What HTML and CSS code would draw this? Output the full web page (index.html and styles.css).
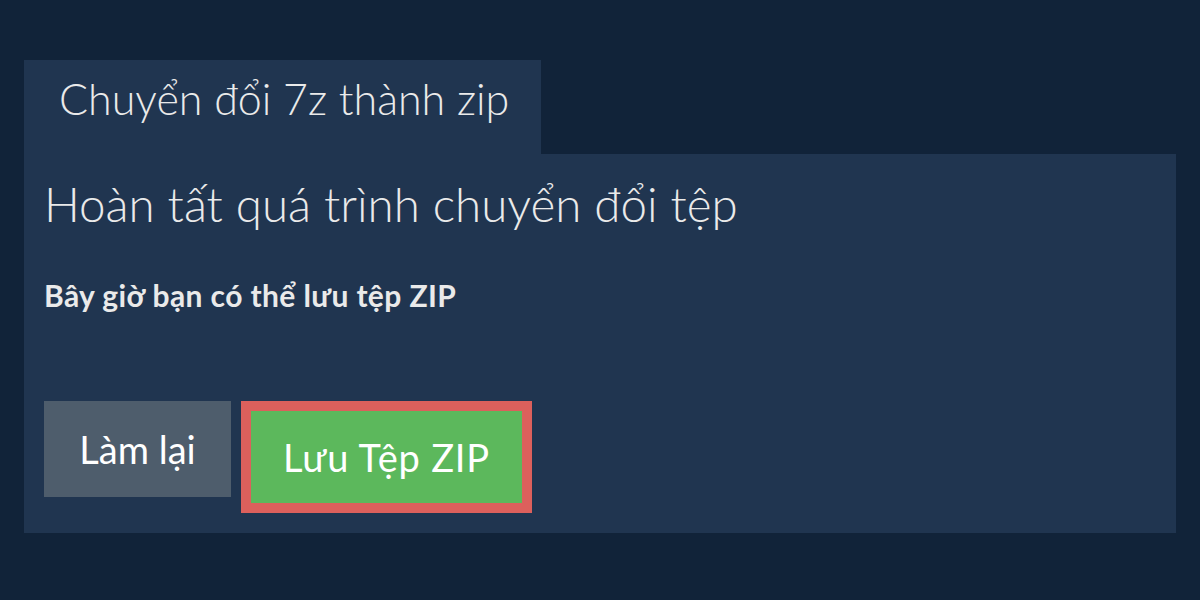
FILE: index.html
```html
<!DOCTYPE html>
<html lang="vi">

<head>
    <meta charset="UTF-8">
    <meta name="viewport" content="width=device-width, initial-scale=1.0">
    <title>Chuyển đổi 7z thành zip</title>
    <link rel="stylesheet" href="styles.css">
</head>

<body>
    <div class="wrapper">
        <div class="tab">Chuyển đổi 7z thành zip</div>
        <div class="panel">
            <h1>Hoàn tất quá trình chuyển đổi tệp</h1>
            <p class="note">Bây giờ bạn có thể lưu tệp ZIP</p>
            <div class="actions">
                <button class="btn btn-reset">Làm lại</button>
                <button class="btn btn-save">Lưu Tệp ZIP</button>
            </div>
        </div>
    </div>
</body>

</html>
```

FILE: styles.css
```css
body {
    font-family: Lato, "Noto Sans", sans-serif;
    margin: 0;
    padding: 0;
    background-color: #112339;
    color: #fff;
}

.wrapper {
    padding: 60px 24px 24px;
}

.tab {
    display: inline-block;
    background-color: #203550;
    padding: 0 32px 0 35px;
    height: 94px;
    line-height: 78px;
    font-size: 43px;
    font-weight: 300;
    color: #eaeaea;
}

.panel {
    background-color: #203550;
    padding: 20px;
    height: 339px;
}

h1 {
    margin: 0;
    font-size: 47.5px;
    font-weight: 300;
    line-height: 60px;
    color: #eaeaea;
}

.note {
    margin: 43px 0 0;
    font-size: 30px;
    font-weight: 700;
    line-height: 36px;
    letter-spacing: 0.4px;
    color: #eaeaea;
}

.actions {
    display: flex;
    align-items: flex-start;
    gap: 10px;
    margin-top: 88px;
}

.btn {
    font-family: Lato, "Noto Sans", sans-serif;
    font-size: 38px;
    font-weight: 400;
    color: #fff;
    border: none;
    cursor: pointer;
}

.btn-reset {
    background-color: #4e5d6c;
    width: 187px;
    height: 96px;
}

.btn-save {
    background-color: #5cb85c;
    border: 10px solid #dc605c;
    width: 291px;
    height: 112px;
    letter-spacing: 0.8px;
}
```
